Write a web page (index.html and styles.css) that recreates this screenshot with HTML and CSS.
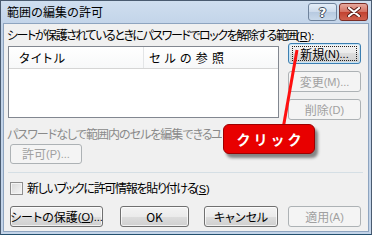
FILE: index.html
```html
<!DOCTYPE html>
<html lang="ja">
<head>
<meta charset="utf-8">
<title>範囲の編集の許可</title>
<link rel="stylesheet" href="styles.css">
</head>
<body>
<div class="window">
  <div class="titlebar">
    <span class="title">範囲の編集の許可</span>
    <div class="tb-buttons">
      <div class="tb-btn help">?</div>
      <div class="tb-btn close">
        <svg width="14" height="10" viewBox="0 0 14 10"><path d="M2 1 L12 9 M12 1 L2 9" stroke="#5a1f1a" stroke-width="4" stroke-linecap="round"/><path d="M2 1 L12 9 M12 1 L2 9" stroke="#ffffff" stroke-width="2.2" stroke-linecap="round"/></svg>
      </div>
    </div>
  </div>
  <div class="client">
    <div class="label l1"><span class="just j1">シートが保護されているときにパスワードでロックを解除する範囲</span><span class="an">(<u>R</u>):</span></div>
    <div class="range-row">
      <div class="listbox">
        <div class="list-head">
          <div class="col c1"><span class="just jh1">タイトル</span></div>
          <div class="col c2"><span class="just jh2">セルの参照</span></div>
        </div>
      </div>
      <div class="side-btns">
        <div class="btn default"><span class="focus">新規<span class="an">(N)...</span></span></div>
        <div class="btn disabled">変更<span class="an">(M)...</span></div>
        <div class="btn disabled">削除<span class="an">(D)</span></div>
      </div>
    </div>
    <div class="label l2 dim"><span class="just j2">パスワードなしで範囲内のセルを編集できる</span><span class="rest">ユーザー<span class="an">(E):</span></span></div>
    <div class="btn disabled permit">許可<span class="an">(P)...</span></div>
    <div class="sep"></div>
    <div class="check-row"><span class="checkbox"></span><span class="check-label"><span class="just j3">新しいブックに許可情報を貼り付ける</span><span class="an">(<u>S</u>)</span></span></div>
    <div class="bottom-btns">
      <div class="btn b-protect">シートの保護<span class="an">(<u>O</u>)...</span></div>
      <div class="btn b-ok">OK</div>
      <div class="btn b-cancel">キャンセル</div>
      <div class="btn disabled b-apply">適用<span class="an">(A)</span></div>
    </div>
  </div>
  <svg class="pointer" width="372" height="235" viewBox="0 0 372 235"><line x1="297" y1="50" x2="283.5" y2="126" stroke="#ff1010" stroke-width="3"/></svg>
  <div class="callout">クリック</div>
</div>
</body>
</html>
```
FILE: styles.css
```css
html, body {
  margin: 0;
  padding: 0;
  background: #ffffff;
}
body {
  font-family: "Noto Sans CJK JP", "Liberation Sans", sans-serif;
  font-size: 12px;
  color: #000;
  font-feature-settings: "palt";
}
.an {
  letter-spacing: 0;
  font-family: "Liberation Sans", sans-serif;
  font-size: 11px;
}
.just {
  display: inline-block;
  white-space: normal;
  text-align: justify;
  text-align-last: justify;
  text-justify: inter-character;
  letter-spacing: -2.5px;
  vertical-align: top;
}
.j1 { width: 289px; }
.j2 { width: 203px; }
.j3 { width: 168px; }
.jh1 { width: 45px; letter-spacing: -1px; }
.jh2 { width: 74px; letter-spacing: -1px; }
.rest { letter-spacing: -1px; margin-left: 1px; }
.window {
  position: relative;
  width: 372px;
  height: 235px;
  box-sizing: border-box;
  border: 1px solid #4a5b70;
  border-bottom-color: #24506e;
  background: linear-gradient(#cfdeef, #bfd1e7 30px, #c3d4e9);
  display: flex;
  flex-direction: column;
  overflow: hidden;
}
.titlebar {
  height: 22px;
  flex: none;
  display: flex;
  align-items: center;
  justify-content: space-between;
}
.title {
  margin-left: 6px;
  font-size: 12px;
  line-height: 14px;
  font-feature-settings: normal;
}
.tb-buttons {
  display: flex;
  gap: 2px;
  margin-right: 3px;
  align-self: flex-start;
  margin-top: 2px;
}
.tb-btn {
  box-sizing: border-box;
  height: 18px;
  border-radius: 3px;
  display: flex;
  align-items: center;
  justify-content: center;
}
.help {
  width: 29px;
  border: 1px solid #6f839c;
  background: linear-gradient(#e4edf7, #ccdaeb 50%, #b6c9e0 50%, #c8d8ea);
  color: #fff;
  font-family: "DejaVu Sans", sans-serif;
  font-weight: bold;
  font-size: 13px;
  text-shadow: -1px 0 #3d4a5c, 1px 0 #3d4a5c, 0 -1px #3d4a5c, 0 1px #3d4a5c;
}
.close {
  width: 29px;
  border: 1px solid #7a2d26;
  background: linear-gradient(#e7a99e, #d46f60 50%, #c2412f 50%, #d0614e);
}
.close svg { display: block; }
.client {
  flex: 1;
  margin: 0 2px 2px 2px;
  border: 1px solid #8ea4bf;
  background: #f0f0f0;
  display: flex;
  flex-direction: column;
  align-items: flex-start;
  min-height: 0;
}
.label {
  line-height: 14px;
  height: 14px;
  white-space: nowrap;
  margin-left: 3px;
}
.l1 {
  margin-top: 4px;
}
.dim { color: #8a8a8a; }
.l2 {
  margin-top: 7px;
  width: 215px;
  overflow: hidden;
}
u { text-decoration: underline; text-underline-offset: 1px; }
.range-row {
  display: flex;
  margin-top: 1px;
  margin-left: 4px;
  gap: 9px;
}
.listbox {
  width: 271px;
  height: 72px;
  margin-top: 3px;
  box-sizing: border-box;
  border: 1px solid #828790;
  background: #ffffff;
}
.list-head {
  display: flex;
  height: 22px;
  box-sizing: border-box;
  border-bottom: 1px solid #d5d5d5;
  background: linear-gradient(#ffffff, #f7f8f9);
}
.col {
  line-height: 21px;
  white-space: nowrap;
}
.col .just { line-height: 21px; }
.c1 {
  width: 135px;
  padding-left: 10px;
  box-sizing: border-box;
  border-right: 1px solid #e3e5e7;
}
.c2 { padding-left: 5px; }
.side-btns {
  display: flex;
  flex-direction: column;
  gap: 7px;
}
.btn {
  box-sizing: border-box;
  width: 73px;
  height: 21px;
  border: 1px solid #707070;
  border-radius: 3px;
  background: linear-gradient(#f3f3f3, #ebebeb 50%, #dddddd 50%, #cfcfcf);
  box-shadow: inset 0 0 0 1px rgba(255,255,255,0.7);
  display: flex;
  align-items: center;
  justify-content: center;
  line-height: 14px;
  white-space: nowrap;
}
.btn.default {
  border-color: #3c7fb1;
  box-shadow: inset 0 0 0 1px #c6e4f7;
}
.focus {
  box-sizing: border-box;
  width: 65px;
  height: 15px;
  border: 1px dotted #222;
  display: flex;
  align-items: center;
  justify-content: center;
}
.btn.disabled {
  border-color: #adb2b5;
  background: #f4f4f4;
  box-shadow: none;
  color: #a0a0a0;
}
.permit {
  width: 72px;
  height: 20px;
  margin-top: 3px;
  margin-left: 6px;
}
.sep {
  width: 355px;
  height: 1px;
  margin-top: 8px;
  margin-left: 4px;
  background: #d5dfe5;
}
.check-row {
  display: flex;
  align-items: center;
  margin-top: 8px;
  margin-left: 6px;
  height: 14px;
}
.checkbox {
  box-sizing: border-box;
  width: 13px;
  height: 13px;
  border: 1px solid #8f8f8f;
  background: linear-gradient(135deg, #d8d8d8, #f6f6f6);
  box-shadow: inset 0 0 0 1px #f4f4f4;
}
.check-label {
  margin-left: 4px;
  line-height: 14px;
  height: 14px;
  white-space: nowrap;
}
.bottom-btns {
  display: flex;
  margin-top: 11px;
  margin-left: 6px;
}
.b-protect { width: 93px; }
.b-ok { width: 69px; margin-left: 17px; }
.b-cancel { width: 74px; margin-left: 15px; }
.b-apply { width: 73px; margin-left: 10px; }
.pointer {
  position: absolute;
  left: -1px;
  top: -1px;
  pointer-events: none;
}
.callout {
  position: absolute;
  left: 222px;
  top: 123px;
  width: 92px;
  height: 30px;
  box-sizing: border-box;
  border: 1px solid #9c0000;
  border-radius: 6px;
  background: #e80000;
  box-shadow: 3px 4px 3px rgba(0,0,0,0.45);
  color: #ffffff;
  font-weight: bold;
  font-size: 14px;
  letter-spacing: 3px;
  display: flex;
  align-items: center;
  justify-content: center;
  padding-left: 3px;
  font-feature-settings: normal;
}
```
